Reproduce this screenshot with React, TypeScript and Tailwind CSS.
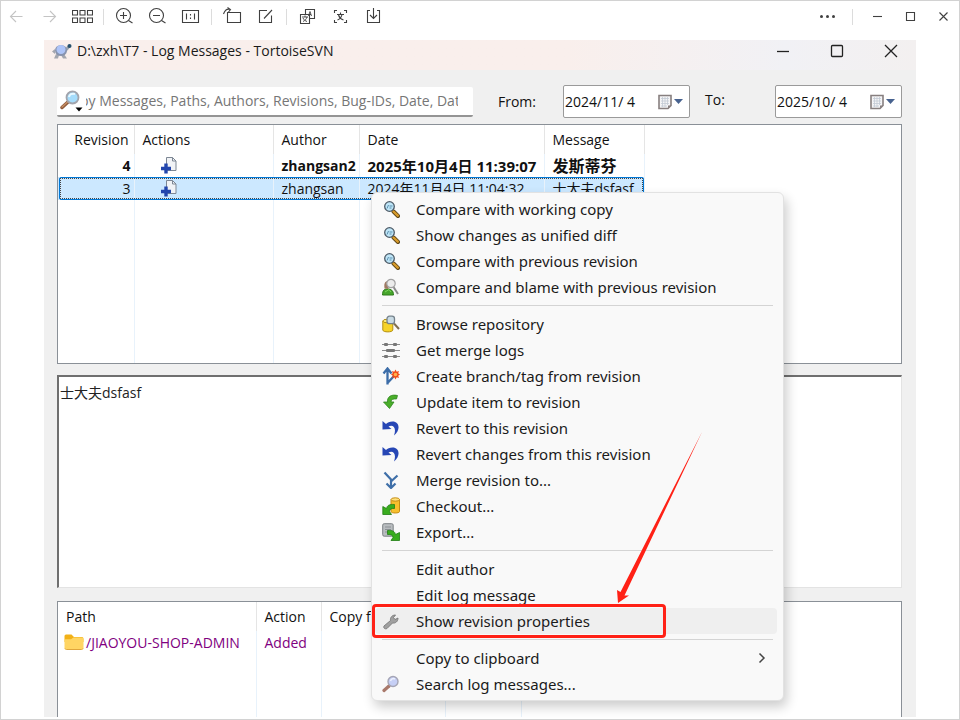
import type { ReactNode } from 'react';

interface IconProps {
  children: ReactNode;
}

// 21px line icon of the viewer toolbar
function LineIcon({ children }: IconProps) {
  return (
    <svg width="21" height="21" viewBox="0 0 21 21" fill="none" stroke="currentColor" strokeWidth="1.1" aria-hidden="true">
      {children}
    </svg>
  );
}

// 18px coloured icon of the context menu
function MenuIcon({ children }: IconProps) {
  return (
    <svg width="18" height="18" viewBox="0 0 18 18" fill="none" aria-hidden="true">
      {children}
    </svg>
  );
}

interface ToolButtonProps {
  label: string;
  muted?: boolean;
  children: ReactNode;
}

function ToolButton({ label, muted, children }: ToolButtonProps) {
  return (
    <button
      type="button"
      aria-label={label}
      title={label}
      className={`flex w-[33px] h-[33px] items-center justify-center ${muted ? 'text-[#c4c4c4]' : 'text-[#404040]'}`}
    >
      <LineIcon>{children}</LineIcon>
    </button>
  );
}

function Divider({ wide }: { wide?: boolean }) {
  return (
    <div className={`flex justify-center ${wide ? 'w-[17px]' : 'w-[9px]'}`}>
      <div className="w-px h-4 bg-[#dcdcdc]" />
    </div>
  );
}

function ViewerToolbar() {
  return (
    <header className="flex items-center h-[33px] mb-[7px]">
      <ToolButton label="Previous" muted>
        <path d="M16.5 10.5H4.5M10 5L4.5 10.5L10 16" />
      </ToolButton>
      <ToolButton label="Next" muted>
        <path d="M4.5 10.5H16.5M11 5L16.5 10.5L11 16" />
      </ToolButton>
      <ToolButton label="Thumbnails">
        <path d="M.5 4.5h5v4.5h-5zM8 4.5h5v4.5H8zM15.5 4.5h5v4.5h-5zM.5 12h5v4.5h-5zM8 12h5v4.5H8zM15.5 12h5v4.5h-5z" />
      </ToolButton>
      <Divider />
      <ToolButton label="Zoom in">
        <circle cx="9.5" cy="9.5" r="7" />
        <path d="M14.5 14.5L18.5 17M6 9.5h7M9.5 6v7" />
      </ToolButton>
      <ToolButton label="Zoom out">
        <circle cx="9.5" cy="9.5" r="7" />
        <path d="M14.5 14.5L18.5 17M6 9.5h7" />
      </ToolButton>
      <ToolButton label="Actual size">
        <path d="M2.5 4.5h16v12h-16zM6.5 7.5v6M14.5 7.5v6" />
        <path d="M10.5 8v1.5M10.5 11.5v1.5" />
      </ToolButton>
      <Divider />
      <ToolButton label="Rotate">
        <path d="M5.5 6.5h13v10h-13zM8.5 3.5C5.5 2.5 3 4 1.5 8M5.5 1.5L8.5 3.5L6.5 6" />
      </ToolButton>
      <ToolButton label="Edit">
        <path d="M12 4.5H4.5v12h12V9.5M9 12.5L17 4" />
      </ToolButton>
      <Divider />
      <ToolButton label="Translate">
        <path d="M8.5 8.5V3.5h9v9h-5M3.5 8.5h9v9h-9z" />
        <path d="M11.5 10L13 5.5L14.5 10M12 8.5h2M5 11h6M8 9.5V11M6 15.5c2-1 3.5-2.5 4-4.5M6 12c1 2 2.5 3 4 3.5" strokeWidth=".9" />
      </ToolButton>
      <ToolButton label="Recognise text">
        <path d="M4.5 7V4.5H7M14 4.5h2.5V7M16.5 14v2.5H14M7 16.5H4.5V14" />
        <path d="M7 8.5h7M10.5 6.5v2M7.5 14c2.5-1 4-3 4.5-5.5M8.5 9c.8 2.5 2.7 4.3 5 5" />
      </ToolButton>
      <ToolButton label="Download">
        <path d="M7 4.5H4.5v12h12v-12H14M10.5 2v10M7 9L10.5 12.5L14 9" />
      </ToolButton>
      <div className="flex items-center ml-auto">
        <ToolButton label="More">
          <g fill="currentColor" stroke="none">
            <circle cx="4.5" cy="10.5" r="1.5" />
            <circle cx="10.5" cy="10.5" r="1.5" />
            <circle cx="16.5" cy="10.5" r="1.5" />
          </g>
        </ToolButton>
        <Divider wide />
        <ToolButton label="Minimize viewer">
          <path d="M6 10.5h9" />
        </ToolButton>
        <ToolButton label="Maximize viewer">
          <path d="M6.5 6.5h8v8h-8z" />
        </ToolButton>
        <ToolButton label="Close viewer">
          <path d="M6.5 6.5l8 8M14.5 6.5l-8 8" />
        </ToolButton>
      </div>
    </header>
  );
}

function TitleBar() {
  const button = 'flex w-[50px] h-[22px] items-center justify-center';
  return (
    <div className="flex items-center h-[30px] pb-2 pl-2 bg-linear-to-r from-[#f9efec] from-60% via-[#f1f1f5] via-85% to-[#f3f0f0]">
      <svg width="20" height="18" viewBox="0 0 20 18" aria-hidden="true">
        <path d="M3 7L0 9.500L3 12zM4 12L2 16.500H6L7 13zM12 12L15 16.500H11L9 13z" fill="#a3a6ae" />
        <path d="M12 10L17 4.5" stroke="#9aa3ae" strokeWidth="3" />
        <ellipse cx="9" cy="8.5" rx="6" ry="5.5" fill="#8793ae" />
        <ellipse cx="9" cy="7.5" rx="4.500" ry="4.5" fill="#adc4f8" />
        <circle cx="17.5" cy="4" r="2" fill="#25506d" />
      </svg>
      <h1 className="ml-[5px] text-[14px] leading-5 text-[#1a1a1a]">D:\zxh\T7 - Log Messages - TortoiseSVN</h1>
      <div className="flex gap-1 ml-auto text-[#222222]">
        <button type="button" aria-label="Minimize" className={button}>
          <svg width="14" height="14" viewBox="0 0 14 14" stroke="currentColor" strokeWidth="1.3">
            <path d="M1 7.5h12" />
          </svg>
        </button>
        <button type="button" aria-label="Maximize" className={button}>
          <svg width="14" height="14" viewBox="0 0 14 14" fill="none" stroke="currentColor" strokeWidth="1.3">
            <rect x="1.5" y="1.5" width="11" height="11" rx="1" />
          </svg>
        </button>
        <button type="button" aria-label="Close" className={button}>
          <svg width="14" height="14" viewBox="0 0 14 14" stroke="currentColor" strokeWidth="1.3">
            <path d="M1 1l12 12M13 1L1 13" />
          </svg>
        </button>
      </div>
    </div>
  );
}

interface DateFieldProps {
  id: string;
  value: string;
}

function DateField({ id, value }: DateFieldProps) {
  return (
    <div className="flex items-center w-[127px] h-[33px] bg-white border border-[#9a9a9a] rounded-xs">
      <input id={id} defaultValue={value} className="min-w-0 flex-1 pl-px whitespace-pre outline-none" />
      <button type="button" aria-label={`Choose date for ${id}`} className="flex items-center gap-[2px] mr-[6px]">
        <svg width="14" height="16" viewBox="0 0 14 16" aria-hidden="true">
          <path d="M1 1.5h12v10l-3 3H1z" fill="#f4f4f6" stroke="#877f7f" strokeWidth="1.6" />
          <path d="M3 4.5h8M3 7h8M3 9.5h8M3 12h6M4.5 3v10M7 3v10M9.5 3v8" stroke="#c3cad4" strokeWidth=".8" />
          <path d="M10 14.5v-3h3z" fill="#877f7f" />
        </svg>
        <svg width="9" height="5" viewBox="0 0 9 5" aria-hidden="true">
          <path d="M0 0h9L4.5 5z" fill="#47628f" />
        </svg>
      </button>
    </div>
  );
}

function FilterBar() {
  return (
    <div className="flex items-center h-[33px] text-[14px] text-[#111111]">
      <div className="flex flex-1 items-center h-[30px] pl-[3px] pr-[15px] bg-white border-b-2 border-[#949494] rounded-xs">
        <button type="button" aria-label="Filter options">
          <svg width="23" height="22" viewBox="0 0 23 22" aria-hidden="true">
            <path d="M2 17.5L8 12" stroke="#8f5b3c" strokeWidth="3.5" strokeLinecap="round" />
            <path d="M2 17L7.5 12" stroke="#c98f64" strokeWidth="1.2" strokeLinecap="round" />
            <circle cx="12.5" cy="7.5" r="6" fill="#a5dcfb" stroke="#a2a4ac" strokeWidth="1.8" />
            <path d="M9 7C9.500 4.500 12 3 15 4" stroke="#e9f8ff" strokeWidth="2" fill="none" />
            <path d="M15.5 17.5h7L19 21.500z" fill="#000000" />
          </svg>
        </button>
        <input
          aria-label="Filter log messages"
          placeholder="by Messages, Paths, Authors, Revisions, Bug-IDs, Date, Date Range"
          className="min-w-0 flex-1 ml-[3px] -indent-[6px] placeholder:text-[#767676] outline-none"
        />
      </div>
      <label htmlFor="from" className="w-[65px] ml-[25px]">From:</label>
      <DateField id="from" value="2024/11/ 4" />
      <label htmlFor="to" className="w-[70px] ml-[15px] pb-1">To:</label>
      <DateField id="to" value="2025/10/ 4" />
    </div>
  );
}

function AddedIcon() {
  return (
    <svg width="18" height="18" viewBox="0 0 18 18" aria-hidden="true" className="ml-[17px]">
      <path d="M6.5 .5h6l3.500 3.500v9.500H6.500z" fill="#f1f3f6" stroke="#7d8794" />
      <path d="M12.5 .5v3.500H16" fill="none" stroke="#7d8794" />
      <path d="M4.3 6.500h3.400v3.300H11v3.400H7.700V16.500H4.300v-3.300H1V9.800h3.300z" fill="#2346ad" />
    </svg>
  );
}

const revisions = [
  { revision: 4, author: 'zhangsan2', date: '2025年10月4日 11:39:07', message: '发斯蒂芬', selected: false },
  { revision: 3, author: 'zhangsan', date: '2024年11月4日 11:04:32', message: '士大夫dsfasf', selected: true },
];

function RevisionTable() {
  const head = 'h-[29px] border-r border-[#e5e5e5] font-normal text-left px-2';
  const cell = 'p-0 px-2 border-r border-[#e8f2fb]';
  return (
    <div className="h-60 mt-[6px] bg-white border border-[#8a9097] overflow-hidden">
      <table className="h-full w-[586px] table-fixed text-[14px] leading-[22px] text-[#111111] whitespace-nowrap">
        <colgroup>
          <col className="w-[76px]" />
          <col className="w-[139px]" />
          <col className="w-[86px]" />
          <col className="w-[185px]" />
          <col className="w-[100px]" />
        </colgroup>
        <thead>
          <tr>
            <th className="h-[29px] border-r border-[#e5e5e5] font-normal text-right pr-[5px]">Revision</th>
            <th className={head}>Actions</th>
            <th className={head}>Author</th>
            <th className={head}>Date</th>
            <th className={head}>Message</th>
          </tr>
        </thead>
        <tbody>
          {revisions.map(row => (
            <tr key={row.revision} className={`relative h-[23px] ${row.selected ? 'bg-[#cce8ff]' : 'font-bold'}`}>
              <td className="p-0 pr-[3px] text-right border-r border-[#e8f2fb]">
                {row.selected && (
                  <span className="absolute inset-y-0 left-px right-0 border border-[#0078d7] rounded-xs">
                    <span className="block h-full border border-dotted border-[#444444]" />
                  </span>
                )}
                {row.revision}
              </td>
              <td className={cell}><AddedIcon /></td>
              <td className={cell}>{row.author}</td>
              <td className={`${cell} ${row.selected ? '' : 'text-[15px]'}`}>{row.date}</td>
              <td className={`${cell} ${row.selected ? '' : 'text-[16px]'}`}>{row.message}</td>
            </tr>
          ))}
          <tr aria-hidden="true">
            <td className={cell} />
            <td className={cell} />
            <td className={cell} />
            <td className={cell} />
            <td className={cell} />
          </tr>
        </tbody>
      </table>
    </div>
  );
}

function PathTable() {
  const head = 'h-[29px] border-r border-[#e5e5e5] font-normal text-left px-2';
  const cell = 'p-0 px-2 border-r border-[#e8f2fb]';
  return (
    <div className="grid flex-1 mt-[13px] bg-white border border-b-0 border-[#8a9097] overflow-hidden">
      <table className="h-full w-[463px] table-fixed text-[14px] leading-[22px] text-[#111111] whitespace-nowrap">
        <colgroup>
          <col className="w-[198px]" />
          <col className="w-[65px]" />
          <col className="w-[124px]" />
          <col className="w-[76px]" />
        </colgroup>
        <thead>
          <tr>
            <th className={head}>Path</th>
            <th className={head}>Action</th>
            <th className={head}>Copy from</th>
            <th className={head} />
          </tr>
        </thead>
        <tbody>
          <tr className="h-[23px] text-[#800080]">
            <td className="p-0 pl-[6px] border-r border-[#e8f2fb]">
              <span className="flex items-center gap-[2px]">
                <svg width="20" height="17" viewBox="0 0 20 17" aria-hidden="true">
                  <path d="M.5 2Q.5.5 2 .5H7.500L10 3H18Q19.500 3 19.500 5V8H.5z" fill="#f2b117" />
                  <path d="M.5 6Q.5 5.300 1.500 5.300H7L9.500 3.500H18Q19.500 3.500 19.500 5V14Q19.500 15.500 18 15.500H2Q.5 15.500.5 14z" fill="#ffd563" />
                  <path d="M1 14.500Q1.500 15.500 2.500 15.500H17.500Q18.500 15.500 19 14.500" stroke="#e0a63b" fill="none" />
                </svg>
                /JIAOYOU-SHOP-ADMIN
              </span>
            </td>
            <td className={cell}>Added</td>
            <td className={cell} />
            <td className={cell} />
          </tr>
          <tr aria-hidden="true">
            <td className={cell} />
            <td className={cell} />
            <td className={cell} />
            <td className={cell} />
          </tr>
        </tbody>
      </table>
    </div>
  );
}

const compareIcon = (
  <MenuIcon>
    <path d="M11.500 11.500L16 16" stroke="#5b4417" strokeWidth="4" strokeLinecap="round" />
    <path d="M11.5 11.500L15.800 15.700" stroke="#d79b2b" strokeWidth="2.4" strokeLinecap="round" />
    <circle cx="7.5" cy="6.5" r="4.800" fill="#bfe6f8" stroke="#4c5a66" strokeWidth="1.3" />
    <path d="M5 8.5L6.500 5M7.500 6h3M7.500 8h2" stroke="#5b8fae" />
  </MenuIcon>
);

const blameIcon = (
  <MenuIcon>
    <path d="M.5 17C.5 12.500 2 11 5.500 11S11.500 12.500 11.500 17z" fill="#46a52c" stroke="#2c7a18" />
    <path d="M2.500 10.500C1.500 4 4 3 6.500 3V11z" fill="#a07a63" />
    <path d="M3 14L7 11.500L9 14" stroke="#7fd45f" />
    <path d="M11.500 9L16 16" stroke="#8b8b8b" strokeWidth="2" />
    <circle cx="9" cy="5.500" r="4.200" fill="#ececec" stroke="#a3a3a3" strokeWidth="1.2" />
  </MenuIcon>
);

const browseIcon = (
  <MenuIcon>
    <path d="M.8 6v9c0 2.500 10 2.500 10 0V6z" fill="#f6d327" stroke="#b48f10" />
    <ellipse cx="5.800" cy="6" rx="5" ry="1.8" fill="#ffec7a" stroke="#b48f10" />
    <path d="M12 8.500L17 14" stroke="#806f50" strokeWidth="2" />
    <rect x="5" y="1.200" width="7.500" height="7.500" rx="2.5" fill="#c9dbe4" stroke="#75828b" strokeWidth="1.3" />
  </MenuIcon>
);

const mergeLogIcon = (
  <MenuIcon>
    <path d="M0 3.500h18M0 9.500h18M0 15.500h18" stroke="#8a8a8a" strokeWidth="1.2" />
    <g fill="#777777">
      <rect x="2" y="2" width="4" height="3" rx="1" />
      <rect x="11" y="2" width="4" height="3" rx="1" />
      <rect x="4" y="8" width="9" height="3" rx="1" />
      <rect x="2" y="14" width="4" height="3" rx="1" />
      <rect x="11" y="14" width="4" height="3" rx="1" />
    </g>
  </MenuIcon>
);

const branchIcon = (
  <MenuIcon>
    <path d="M5.500 17.500V3M1.500 6.500L5.500 1.500L9.500 6.500M5.500 16L12 9" stroke="#3c6da8" strokeWidth="2.3" />
    <path d="M13.5 2.500l1.200 2.200 2.300-.8-.8 2.300L18 7.500l-1.800 1.300.8 2.300-2.300-.8-1.200 2.200-1.200-2.200-2.300.8.8-2.300L9 7.500l1.800-1.300-.8-2.300 2.300.8z" fill="#f04a18" />
    <circle cx="13.5" cy="7.500" r="1.800" fill="#ffb04d" />
  </MenuIcon>
);

const updateIcon = (
  <MenuIcon>
    <path d="M15.500 2.500C9 1 5 4 5.500 9H1.500L7.500 15.500L12 9H9C9 6.500 11 5.500 14.500 6z" fill="#4aae2a" stroke="#2e8520" strokeWidth=".8" />
  </MenuIcon>
);

const revertIcon = (
  <MenuIcon>
    <path d="M.5 2V10.500L9.500 10L6.500 7.500C10.500 5 15 8 12 16.500C19 11 17.500 2.500 10.500 2.500C7.500 2.500 5.500 3.500 4 5z" fill="#2747b5" />
  </MenuIcon>
);

const mergeIcon = (
  <MenuIcon>
    <path d="M2.500 1.500L9 8.500V17M15.500 4.500L9 10.500M4.500 12.500L9 17L13.500 12.500" stroke="#3f6fa8" strokeWidth="2.2" />
  </MenuIcon>
);

const checkoutIcon = (
  <MenuIcon>
    <path d="M9 2.500v12c0 2 8.500 2 8.500 0v-12z" fill="#f7bf2d" stroke="#c48d15" />
    <ellipse cx="13.250" cy="2.500" rx="4.200" ry="1.700" fill="#ffe07a" stroke="#c48d15" />
    <path d="M12.500 7.500C7.500 7 5 8.500 4.500 11.500L.8 9.500V17.500H9.500L7.500 14.500C7.500 12.500 9 11 12.500 11.500z" fill="#39ac1e" stroke="#1f7d13" strokeWidth=".8" />
  </MenuIcon>
);

const exportIcon = (
  <MenuIcon>
    <rect x=".7" y=".7" width="10.500" height="12.500" rx="1.500" fill="#b9bdc0" stroke="#7c8184" />
    <path d="M3 4h6M3 6.500h6M3 9h4" stroke="#8b9094" />
    <path d="M5.500 7.500C10.500 7 13 8.500 13.500 11.500L17.500 9.500V17.500H9L11 14.500C11 12.500 9 11 5.500 11.500z" fill="#39ac1e" stroke="#1f7d13" strokeWidth=".8" />
  </MenuIcon>
);

const wrenchIcon = (
  <MenuIcon>
    <path d="M2 14L8.500 8.500C8 5.500 10 3 13.500 3L11.500 5.500L13 7.500L16 6C16 9.500 13.500 11.500 10.500 11L5 16.500C3 17.500 1 16 2 14z" fill="#a0a0a0" stroke="#777777" strokeWidth=".9" />
  </MenuIcon>
);

const searchIcon = (
  <MenuIcon>
    <path d="M2 15.500L7 11" stroke="#a9796b" strokeWidth="3.2" strokeLinecap="round" />
    <circle cx="11" cy="6.500" r="5" fill="#c6cff5" stroke="#a5a5b5" strokeWidth="1.4" />
    <path d="M8.500 6C9 4 11 3 13 4" stroke="#eef1ff" strokeWidth="1.5" />
  </MenuIcon>
);

interface MenuEntry {
  label: string;
  icon?: ReactNode;
  active?: boolean;
  submenu?: boolean;
}

const menuGroups: MenuEntry[][] = [
  [
    { label: 'Compare with working copy', icon: compareIcon },
    { label: 'Show changes as unified diff', icon: compareIcon },
    { label: 'Compare with previous revision', icon: compareIcon },
    { label: 'Compare and blame with previous revision', icon: blameIcon },
  ],
  [
    { label: 'Browse repository', icon: browseIcon },
    { label: 'Get merge logs', icon: mergeLogIcon },
    { label: 'Create branch/tag from revision', icon: branchIcon },
    { label: 'Update item to revision', icon: updateIcon },
    { label: 'Revert to this revision', icon: revertIcon },
    { label: 'Revert changes from this revision', icon: revertIcon },
    { label: 'Merge revision to...', icon: mergeIcon },
    { label: 'Checkout...', icon: checkoutIcon },
    { label: 'Export...', icon: exportIcon },
  ],
  [
    { label: 'Edit author' },
    { label: 'Edit log message' },
    { label: 'Show revision properties', icon: wrenchIcon, active: true },
  ],
  [
    { label: 'Copy to clipboard', submenu: true },
    { label: 'Search log messages...', icon: searchIcon },
  ],
];

// Red frame and arrow drawn over the highlighted entry
function Callout() {
  return (
    <>
      <span className="absolute -left-[3px] -top-[4px] w-[294px] h-[34px] border-3 border-[#ff2116] rounded-sm" />
      <svg width="90" height="174" viewBox="0 0 90 174" aria-hidden="true" className="absolute left-[240px] bottom-[30px]">
        <path d="M87 2L9.500 165.500L14 165.500L3 173L2 160L5.500 162z" fill="#ff2116" />
      </svg>
    </>
  );
}

function ContextMenu() {
  return (
    <div
      role="menu"
      className="absolute left-[327px] top-[152px] w-[413px] py-[3px] pl-[3px] pr-[6px] bg-[#f9f9f9] border border-[#e2e2e2] rounded-md shadow-[3px_6px_12px_rgba(0,0,0,0.2)] font-['Noto_Sans','Noto_Sans_CJK_SC',sans-serif] text-[15px] leading-5 text-[#1b1b1b]"
    >
      {menuGroups.map((group, i) => (
        <div key={i} role="group">
          {i > 0 && <div role="separator" className="h-px ml-[7px] mr-1 my-[5px] bg-[#d4d4d4]" />}
          {group.map(item => (
            <button
              key={item.label}
              type="button"
              role="menuitem"
              className={`relative flex w-full h-[26px] items-center px-[7px] rounded ${item.active ? 'bg-[#efefef]' : ''}`}
            >
              <span className="w-[18px] mr-4">{item.icon}</span>
              {item.label}
              {item.submenu && (
                <svg width="8" height="12" viewBox="0 0 8 12" fill="none" aria-hidden="true" className="ml-auto mr-1">
                  <path d="M1.5 1.5L6 6L1.5 10.5" stroke="#444444" strokeWidth="1.5" />
                </svg>
              )}
              {item.active && <Callout />}
            </button>
          ))}
        </div>
      ))}
    </div>
  );
}

export default function App() {
  return (
    <div className="flex flex-col min-h-screen pb-[3px] bg-white ring-1 ring-inset ring-[#d2d2d2] font-['Open_Sans','Noto_Sans_CJK_SC',sans-serif]">
      <ViewerToolbar />
      <main className="relative flex flex-col flex-1 mx-11 bg-[#f0f0f0]">
        <TitleBar />
        <div className="flex flex-col flex-1 pt-[15px] pl-[13px] pr-[14px]">
          <FilterBar />
          <RevisionTable />
          <textarea
            aria-label="Log message"
            defaultValue="士大夫dsfasf"
            className="block w-full h-[213px] mt-[11px] px-px py-[5px] bg-white border-t-2 border-l-2 border-b border-r border-t-[#6f6f6f] border-l-[#6f6f6f] border-b-[#e3e3e3] border-r-[#e3e3e3] resize-none outline-none text-[14px] leading-[22px] text-[#222222]"
          />
          <PathTable />
        </div>
        <ContextMenu />
      </main>
    </div>
  );
}
